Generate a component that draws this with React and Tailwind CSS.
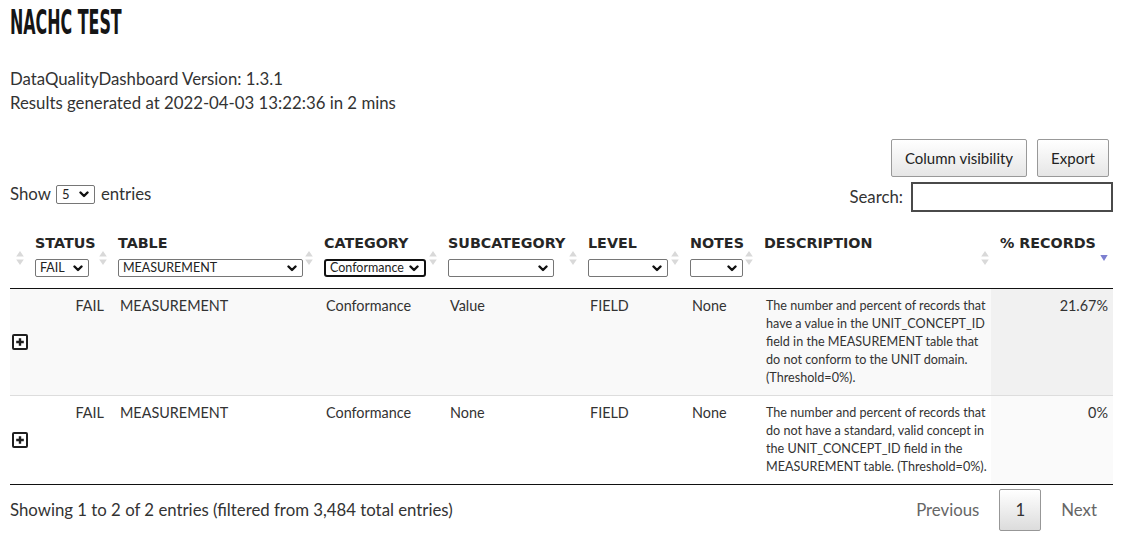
import React from 'react';

const SortBoth = () => (
	<svg width="8" height="15" viewBox="0 0 8 15" aria-hidden="true">
		<path d="M4 0.5L7.8 6H0.2z" fill="#d9d9d9" />
		<path d="M4 14.5L0.2 9H7.8z" fill="#d9d9d9" />
	</svg>
);

const SortDesc = () => (
	<svg width="8" height="15" viewBox="0 0 8 15" aria-hidden="true">
		<path d="M0.3 4.5H7.7L4 10.5z" fill="#7c7fd0" />
	</svg>
);

const PlusBox = () => (
	<svg width="16" height="16" viewBox="0 0 16 16" aria-hidden="true" className="shrink-0">
		<rect x="1" y="1" width="14" height="14" rx="1" fill="#fff" stroke="#1f1f1f" strokeWidth="2" />
		<path d="M8 4.2v7.6M4.2 8h7.6" stroke="#1f1f1f" strokeWidth="2.4" />
	</svg>
);

const Chevron = () => (
	<svg width="10" height="7" viewBox="0 0 10 7" aria-hidden="true" className="shrink-0">
		<path d="M1.5 1.5L5 5l3.5-3.5" fill="none" stroke="#111" strokeWidth="2.4" strokeLinecap="round" strokeLinejoin="round" />
	</svg>
);

const Select = ({ className, value }) => (
	<span className={`relative inline-flex h-[18px] items-center justify-between bg-white pl-[4px] pr-[5px] font-['Lato',sans-serif] text-[12.5px] font-normal leading-none text-[#222] ${className}`}>
		<span>{value}</span>
		<Chevron />
	</span>
);

const columns = [
	{ key: 'ctrl', width: 'w-[16px]', label: '' },
	{ key: 'status', width: 'w-[83px]', label: 'STATUS', select: <Select value="FAIL" className="w-[54px] rounded-[2px] border border-[#767676]" /> },
	{ key: 'table', width: 'w-[206px]', label: 'TABLE', select: <Select value="MEASUREMENT" className="w-[185px] rounded-[2px] border border-[#767676]" /> },
	{ key: 'category', width: 'w-[124px]', label: 'CATEGORY', select: <Select value="Conformance" className="w-[102px] rounded-[3px] border-2 border-[#111]" /> },
	{ key: 'subcategory', width: 'w-[140px]', label: 'SUBCATEGORY', select: <Select value="" className="w-[106px] rounded-[2px] border border-[#767676]" /> },
	{ key: 'level', width: 'w-[102px]', label: 'LEVEL', select: <Select value="" className="w-[80px] rounded-[2px] border border-[#767676]" /> },
	{ key: 'notes', width: 'w-[74px]', label: 'NOTES', select: <Select value="" className="w-[53px] rounded-[2px] border border-[#767676]" /> },
	{ key: 'description', width: 'w-[236px]', label: 'DESCRIPTION' },
	{ key: 'records', width: 'w-[122px]', label: '% RECORDS', sorted: true },
];

const rows = [
	{
		status: 'FAIL',
		table: 'MEASUREMENT',
		category: 'Conformance',
		subcategory: 'Value',
		level: 'FIELD',
		notes: 'None',
		description: [
			'The number and percent of records that',
			'have a value in the UNIT_CONCEPT_ID',
			'field in the MEASUREMENT table that',
			'do not conform to the UNIT domain.',
			'(Threshold=0%).',
		],
		records: '21.67%',
	},
	{
		status: 'FAIL',
		table: 'MEASUREMENT',
		category: 'Conformance',
		subcategory: 'None',
		level: 'FIELD',
		notes: 'None',
		description: [
			'The number and percent of records that',
			'do not have a standard, valid concept in',
			'the UNIT_CONCEPT_ID field in the',
			'MEASUREMENT table. (Threshold=0%).',
		],
		records: '0%',
	},
];

export default function App() {
	return (
		<div className="min-h-[551px] w-[1128px] bg-white px-[10px] font-['Lato',sans-serif] text-[#333]">
			<div className="w-[1103px]">
				<h1 className="pt-[3px] font-['DejaVu_Sans_Condensed',sans-serif] text-[33px] font-bold leading-[40px] text-[#151515]">
					<span className="inline-block origin-left scale-x-[0.535]">NACHC TEST</span>
				</h1>

				<div className="mt-[24px] text-[16.8px] leading-[24px]">
					<p>DataQualityDashboard Version: 1.3.1</p>
					<p>Results generated at 2022-04-03 13:22:36 in 2 mins</p>
				</div>

				<div className="mt-[24px] flex justify-end gap-[10px] pr-[4px]">
					<button type="button" className="h-[38px] rounded-[2px] border border-[#999] bg-linear-to-b from-white to-[#e6e6e6] px-[13px] text-[15px] text-[#222]">
						Column visibility
					</button>
					<button type="button" className="h-[38px] rounded-[2px] border border-[#999] bg-linear-to-b from-white to-[#e6e6e6] px-[13px] text-[15px] text-[#222]">
						Export
					</button>
				</div>

				<div className="mt-[5px] flex items-start justify-between">
					<div className="flex items-center text-[16.8px] leading-[24px]">
						<span>Show</span>
						<span className="ml-[5px] inline-flex h-[19px] w-[39px] items-center justify-between rounded-[2px] border border-[#767676] bg-white pl-[5px] pr-[5px] text-[13px] leading-none text-[#222]">
							<span>5</span>
							<Chevron />
						</span>
						<span className="ml-[6px]">entries</span>
					</div>
					<label className="flex items-center text-[16.8px]">
						<span>Search:</span>
						<input type="search" className="ml-[8px] h-[30px] w-[202px] border-2 border-[#4a4a4a] bg-white px-[4px] outline-none" />
					</label>
				</div>

				<table className="mt-[16px] w-[1103px] table-fixed border-collapse">
					<colgroup>
						{columns.map((col) => (
							<col key={col.key} className={col.width} />
						))}
					</colgroup>
					<thead>
						<tr>
							{columns.map((col) => (
								<th key={col.key} className="relative border-b border-[#111] pb-[11px] pl-[9px] pt-[6px] text-left align-top">
									{col.label && (
										<div className="whitespace-nowrap font-['DejaVu_Sans',sans-serif] text-[14.3px] font-bold leading-[18px] text-[#262626]">{col.label}</div>
									)}
									{col.select && <div className="mt-[7px] flex">{col.select}</div>}
									<span className={`absolute top-1/2 flex -translate-y-1/2 ${col.sorted ? 'right-[5px]' : 'right-[2px]'}`}>
										{col.sorted ? <SortDesc /> : <SortBoth />}
									</span>
								</th>
							))}
						</tr>
					</thead>
					<tbody className="text-[14.4px] font-normal leading-[18px] text-[#333]">
						{rows.map((row, i) => {
							const striped = i % 2 === 0;
							const cell = `align-top pb-[8px] pt-[8px] pl-[11px] pr-[5px] ${i > 0 ? 'border-t border-[#dddddd]' : ''}`;
							return (
								<tr key={i} className={striped ? 'bg-[#f9f9f9]' : 'bg-white'}>
									<td className={`pl-[2px] align-middle ${i > 0 ? 'border-t border-[#dddddd]' : ''}`}>
										<span className="flex">
											<PlusBox />
										</span>
									</td>
									<td className={`${cell} text-right`}>{row.status}</td>
									<td className={cell}>{row.table}</td>
									<td className={cell}>{row.category}</td>
									<td className={cell}>{row.subcategory}</td>
									<td className={cell}>{row.level}</td>
									<td className={cell}>{row.notes}</td>
									<td className={`${cell} whitespace-nowrap text-[12.6px]`}>
										{row.description.map((line) => (
											<div key={line}>{line}</div>
										))}
									</td>
									<td className={`${cell} text-right ${striped ? 'bg-[#f1f1f1]' : 'bg-[#fafafa]'}`}>{row.records}</td>
								</tr>
							);
						})}
						<tr>
							<td colSpan={9} className="border-t border-[#111] p-0" />
						</tr>
					</tbody>
				</table>

				<div className="flex items-center justify-between pt-[4px] text-[16.8px]">
					<div>Showing 1 to 2 of 2 entries (filtered from 3,484 total entries)</div>
					<div className="flex items-center">
						<span className="flex h-[42px] items-center px-[16px] text-[#666]">Previous</span>
						<span className="ml-[4px] flex h-[42px] w-[42px] items-center justify-center rounded-[2px] border border-[#979797] bg-linear-to-b from-white to-[#dcdcdc] text-[#333]">1</span>
						<span className="ml-[4px] flex h-[42px] items-center px-[16px] text-[#666]">Next</span>
					</div>
				</div>
			</div>
		</div>
	);
}
